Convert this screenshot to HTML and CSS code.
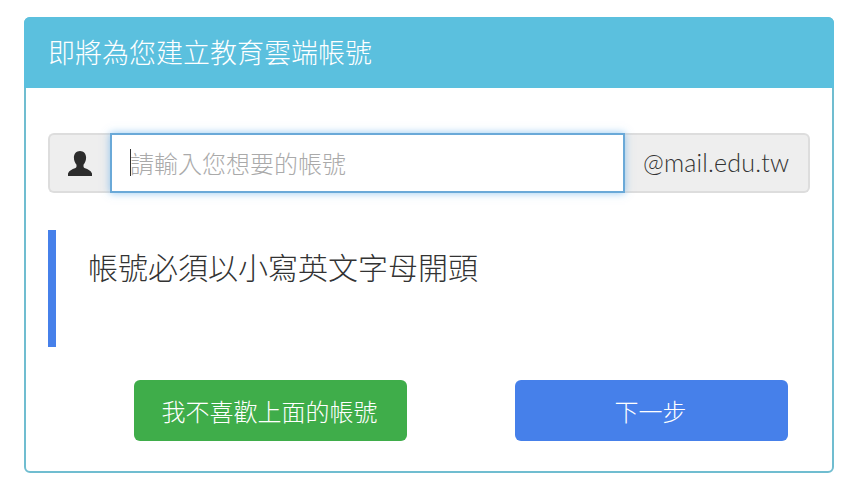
FILE: index.html
```html
<!DOCTYPE html>
<html lang="zh-Hant">
<head>
    <meta charset="UTF-8">
    <meta name="viewport" content="width=device-width, initial-scale=1.0">
    <title>建立教育雲端帳號</title>
    <link rel="stylesheet" href="styles.css">
</head>
<body>
    <div class="panel">
        <div class="panel-heading">即將為您建立教育雲端帳號</div>
        <div class="panel-body">
            <div class="input-group">
                <span class="addon addon-left">
                    <svg class="icon-user" viewBox="0 0 24 25" aria-hidden="true">
                        <path d="M12 0C8.4 0 5.9 2.8 5.9 6.5c0 3 1.1 5.4 2.6 7.2v1.6c0 1-.6 1.6-1.6 2C4.2 18.4 1 19.6 0 22.5V25h24v-2.5c-1-2.9-4.2-4.1-6.9-5.2-1-.4-1.6-1-1.6-2v-1.6c1.5-1.8 2.6-4.2 2.6-7.2C18.1 2.8 15.6 0 12 0z"/>
                    </svg>
                </span>
                <div class="input-wrap">
                    <input class="form-control" type="text" placeholder="請輸入您想要的帳號">
                    <span class="caret"></span>
                </div>
                <span class="addon addon-right">@mail.edu.tw</span>
            </div>

            <div class="callout">帳號必須以小寫英文字母開頭</div>

            <div class="actions">
                <button class="button green" type="button">我不喜歡上面的帳號</button>
                <button class="button blue" type="button">下一步</button>
            </div>
        </div>
    </div>
</body>
</html>
```

FILE: styles.css
```css
* {
    margin: 0;
    padding: 0;
    box-sizing: border-box;
}

body {
    font-family: Lato, "Noto Sans CJK TC", sans-serif;
    font-weight: 300;
    background: white;
    color: #333;
    padding: 17px 23px 17px 24px;
}

.panel {
    width: 810px;
    height: 456px;
    border: 2px solid #70bdd0;
    border-radius: 6px;
}

.panel-heading {
    height: 71px;
    margin: -2px -2px 0;
    padding-left: 24px;
    border-radius: 6px 6px 0 0;
    background: #5bc0de;
    color: white;
    font-size: 27px;
    line-height: 71px;
}

.panel-body {
    padding: 45px 22px 0;
}

.input-group {
    display: flex;
    height: 60px;
}

.addon {
    display: flex;
    align-items: center;
    background: #eee;
    border: 2px solid #ddd;
    font-size: 25px;
}

.addon-left {
    width: 62px;
    justify-content: center;
    border-right: none;
    border-radius: 6px 0 0 6px;
}

.addon-right {
    width: 185px;
    padding: 0 0 2px 18px;
    border-left: none;
    border-radius: 0 6px 6px 0;
    letter-spacing: 0.2px;
}

.icon-user {
    width: 24px;
    height: 25px;
    fill: #2c2c2c;
}

.input-wrap {
    position: relative;
    flex: 1;
}

.form-control {
    display: block;
    width: 100%;
    height: 60px;
    padding-left: 18px;
    border: 2px solid #6aa9d8;
    outline: none;
    font: inherit;
    font-size: 24px;
    box-shadow: 0 0 8px rgba(102, 175, 233, 0.7);
}

.form-control::placeholder {
    color: #aaa;
    opacity: 1;
}

.caret {
    position: absolute;
    left: 20px;
    top: 16px;
    width: 1px;
    height: 27px;
    background: #333;
}

.callout {
    height: 117px;
    margin-top: 37px;
    padding: 15px 0 0 32px;
    border-left: 8px solid #4680ea;
    font-size: 30px;
    line-height: 45px;
}

.actions {
    display: flex;
    justify-content: space-between;
    margin-top: 33px;
    padding: 0 22px 0 86px;
}

.button {
    width: 273px;
    height: 61px;
    padding-right: 2px;
    border: none;
    border-radius: 6px;
    color: white;
    font: inherit;
    font-size: 24px;
}

.button.green {
    background: #3fad4a;
}

.button.blue {
    background: #4680ea;
}
```
